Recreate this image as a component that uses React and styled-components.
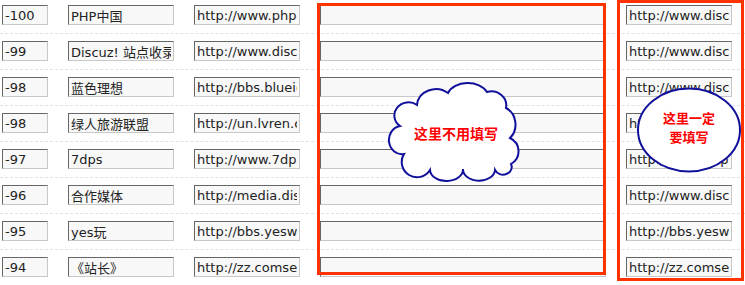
import React from 'react'
import styled, { createGlobalStyle } from 'styled-components'

const GlobalStyle = createGlobalStyle`
  html, body {
    margin: 0;
    padding: 0;
    background: #fff;
  }
  body {
    width: 745px;
    height: 285px;
    overflow: hidden;
  }
`

const Page = styled.div`
  position: relative;
  width: 745px;
  height: 285px;
  overflow: hidden;
  font-family: 'DejaVu Sans', 'Noto Sans CJK SC', sans-serif;
`

const Table = styled.div`
  display: flex;
  flex-direction: column;
  margin-top: -2px;
`

const Row = styled.div`
  display: flex;
  gap: 20px;
  padding: 7px 0 8px 2px;
  border-bottom: 1px dashed #d9e3ec;
`

const Field = styled.input`
  box-sizing: border-box;
  width: ${(p) => p.$w}px;
  height: 20px;
  margin: 0;
  padding: 0 2px;
  border: 1px solid;
  border-color: #666 #c8c8c8 #c8c8c8 #666;
  background: #f8f8f8;
  color: #222;
  font-family: 'DejaVu Sans', 'Noto Sans CJK SC', sans-serif;
  font-size: 13px;
  line-height: 18px;
  outline: none;
`

const Frame = styled.div`
  position: absolute;
  box-sizing: border-box;
  left: ${(p) => p.$x}px;
  top: ${(p) => p.$y}px;
  width: ${(p) => p.$w}px;
  height: ${(p) => p.$h}px;
  border: 3px solid #ff3300;
  pointer-events: none;
`

const Bubble = styled.div`
  position: absolute;
  left: ${(p) => p.$x}px;
  top: ${(p) => p.$y}px;
  width: ${(p) => p.$w}px;
  height: ${(p) => p.$h}px;

  svg {
    position: absolute;
    inset: 0;
    overflow: visible;
  }
`

const Note = styled.div`
  position: absolute;
  inset: 0;
  display: flex;
  flex-direction: column;
  align-items: center;
  justify-content: center;
  padding-left: ${(p) => p.$shift || 0}px;
  padding-bottom: ${(p) => p.$lift || 0}px;
  color: #ff0000;
  font-family: 'Noto Sans CJK SC', sans-serif;
  font-weight: 700;
  font-size: ${(p) => p.$size}px;
  line-height: 19px;
  white-space: nowrap;
`

const rows = [
  ['-100', 'PHP中国', 'http://www.phpchina.com', 'http://www.discuz.net/images/logo.gif'],
  ['-99', 'Discuz! 站点收录大全', 'http://www.discuz.net', 'http://www.discuz.net/images/logo.gif'],
  ['-98', '蓝色理想', 'http://bbs.blueidea.com', 'http://www.discuz.net/images/logo.gif'],
  ['-98', '绿人旅游联盟', 'http://un.lvren.cn', 'http://un.lvren.cn/logo.gif'],
  ['-97', '7dps', 'http://www.7dps.com', 'http://www.7dps.com/logo.gif'],
  ['-96', '合作媒体', 'http://media.discuz.net', 'http://www.discuz.net/images/logo.gif'],
  ['-95', 'yes玩', 'http://bbs.yeswan.com', 'http://bbs.yeswan.com/logo.gif'],
  ['-94', '《站长》', 'http://zz.comsenz.com', 'http://zz.comsenz.com/logo.gif'],
]

const cloudPath = [
  'M37 27',
  'A19 17 0 0 1 68 15',
  'A21 15 0 0 1 107 14',
  'A15 14 0 0 1 126 30',
  'A16 18 0 0 1 130 60',
  'A16 15 0 0 1 131 86',
  'A8 7 0 0 1 115 92',
  'A10 7 0 0 1 83 91',
  'A10 7 0 0 1 50 92',
  'A12 12 0 0 1 24 76',
  'A12 13 0 0 1 20 48',
  'A14 13 0 0 1 37 27 Z',
].join(' ')

export default function App() {
  return (
    <>
      <GlobalStyle />
      <Page>
        <Table>
          {rows.map(([order, name, url, logo], i) => (
            <Row key={i}>
              <Field $w={46} readOnly value={order} />
              <Field $w={106} readOnly value={name} />
              <Field $w={106} readOnly value={url} />
              <Field $w={286} readOnly value="" />
              <Field $w={106} readOnly value={logo} />
            </Row>
          ))}
        </Table>

        <Frame $x={317} $y={3} $w={289} $h={272} />
        <Frame $x={617} $y={0} $w={127} $h={281} />

        <Bubble $x={380} $y={78} $w={140} $h={110}>
          <svg width="140" height="110" viewBox="0 0 140 110">
            <path d={cloudPath} fill="#fff" stroke="#10109a" strokeWidth="2" />
          </svg>
          <Note $size={14} $shift={12} $lift={0}>
            这里不用填写
          </Note>
        </Bubble>

        <Bubble $x={636} $y={87} $w={106} $h={86}>
          <svg width="106" height="86" viewBox="0 0 106 86">
            <ellipse cx="53" cy="43" rx="51" ry="41.5" fill="#fff" stroke="#10109a" strokeWidth="2" />
          </svg>
          <Note $size={13} $lift={7}>
            <span>这里一定</span>
            <span>要填写</span>
          </Note>
        </Bubble>
      </Page>
    </>
  )
}
